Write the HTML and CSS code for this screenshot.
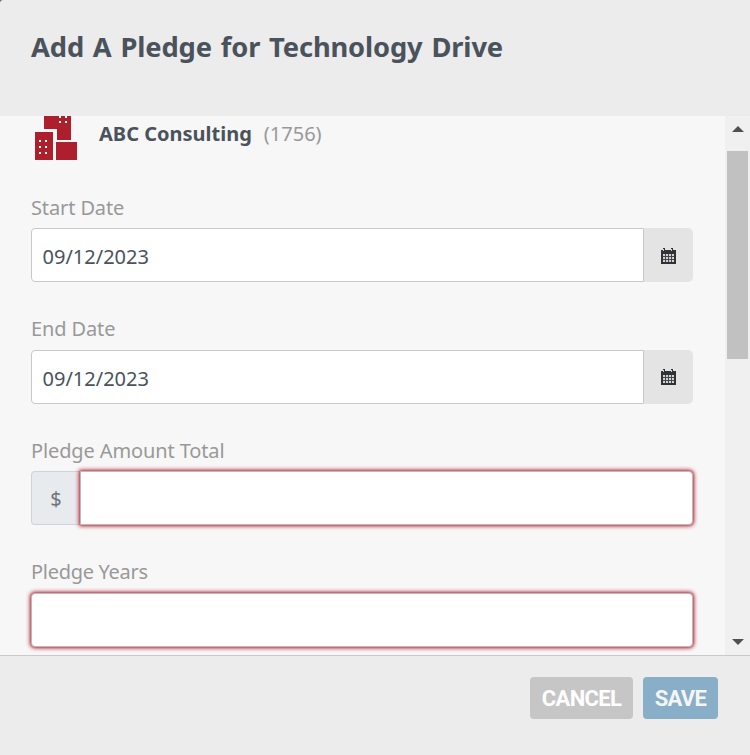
FILE: index.html
```html
<!DOCTYPE html>
<html lang="en">
<head>
<meta charset="utf-8">
<title>Add A Pledge</title>
<link rel="stylesheet" href="styles.css">
</head>
<body>
<svg width="0" height="0" class="defs"><symbol id="cal" viewBox="0 0 16 18"><path fill="#303236" d="M1 3h2V1h2v2h6V1h2v2h3v14H1z"/><path fill="#d2d2d4" d="M3 7h11v8H3z"/><path fill="none" stroke="#45464b" d="M5.5 7v8M8.500 7v8M11.500 7v8M3 9.500h11M3 12.500h11"/><path fill="#c8d0d8" d="M3 2h1v2H3zM11 2h1v2h-1z"/></symbol></svg>
<div class="modal">
<header class="header"><h1>Add A Pledge for Technology Drive</h1></header>
<div class="body">
<main class="content">
<div class="org">
<svg class="org-icon" width="42" height="44" viewBox="0 0 42 44"><g fill="#ad1f2d"><path d="M9 0h27v24H22V13H9z"/><path d="M0 16h18v28H0z"/><path d="M21 26h21v18H21z"/></g><g fill="#fff"><path d="M24 0h2v2h-2zM30 0h2v2h-2zM24 5h2v2h-2zM30 5h2v2h-2zM4 24h2v2H4zM10 24h2v2h-2zM4 30h2v2H4zM10 30h2v2h-2zM4 36h2v2H4zM10 36h2v2h-2z"/></g></svg>
<strong class="name">ABC Consulting</strong><span class="id">(1756)</span></div>
<div class="field"><label for="s">Start Date</label><div class="group"><input class="date" id="s" value="09/12/2023"><button class="cal" aria-label="Calendar"><svg width="16" height="18"><use href="#cal"/></svg></button></div></div>
<div class="field"><label class="tight" for="e">End Date</label><div class="group"><input class="date end" id="e" value="09/12/2023"><button class="cal" aria-label="Calendar"><svg width="16" height="18"><use href="#cal"/></svg></button></div></div>
<div class="field"><label for="a">Pledge Amount Total</label><div class="group"><span class="prefix">$</span><input class="invalid" id="a"></div></div>
<div class="field"><label class="tight years" for="y">Pledge Years</label><div class="group"><input class="invalid" id="y"></div></div>
</main>
<div class="scroll"><svg width="12" height="6" viewBox="0 0 12 6"><path fill="#505050" d="M6 0l6 6H0z"/></svg><div class="thumb"></div><svg class="down" width="12" height="6" viewBox="0 0 12 6"><path fill="#505050" d="M0 0h12L6 6z"/></svg></div>
</div>
<footer class="footer"><button class="btn cancel">CANCEL</button><button class="btn save">SAVE</button></footer>
</div>
</body>
</html>
```
FILE: styles.css
```css
*{box-sizing:border-box}
body{margin:0;font-family:"Noto Sans",sans-serif;background:#286381}
.modal{height:755px;display:flex;flex-direction:column;background:#ececec;border-top-left-radius:3px}
.header{height:116px;padding:27px 31px}
h1{margin:0;font-size:27.3px;font-weight:700;line-height:40px;letter-spacing:-.13px;word-spacing:1.9px;color:#4a525b;white-space:nowrap}
.body{height:539px;display:flex;background:#f7f7f7;overflow:hidden}
.content{flex:1;padding:0 32px 0 31px}
.org{height:81px;display:flex;align-items:flex-start;padding-left:4px}
.name{margin-left:22px;font-size:20px;line-height:36px;color:#4a525b}
.id{margin-left:12px;font-size:20px;line-height:36px;color:#999}
.field{height:121.5px}
label{display:block;height:31px;font-size:20px;line-height:22px;color:#999;letter-spacing:-.12px}
.tight{line-height:20px}
.years{letter-spacing:-.3px}
.group{display:flex;height:54px}
input{flex:1;min-width:0;border:1px solid #c6c8ca;border-radius:4px;padding:0 10px;font:20px "Noto Sans",sans-serif;color:#4a525b;background:#fff;outline:0}
.date{border-radius:4px 0 0 4px;padding-top:2px;padding-left:10.5px}
.end{padding-top:3px}
.cal{width:49px;border:0;border-radius:0 5px 5px 0;background:#e4e4e4;padding:1px 1px 0 0;display:flex;align-items:center;justify-content:center}
.prefix{width:49px;background:#e8ebee;border:1px solid #ced4da;border-right:0;border-radius:4px 0 0 4px;color:#6c757d;line-height:54px;text-align:center;font-size:20px}
.invalid{border-color:#bbb;border-radius:4px;box-shadow:0 0 4px 1px #b51f30,0 0 2px #b51f3099}
.prefix + .invalid{border-radius:0 4px 4px 0}
.scroll{width:25px;background:#f0f0f0;display:flex;flex-direction:column;align-items:center;padding:10px 0}
.thumb{width:21px;height:208px;margin-top:19px;background:#c1c1c1}
.down{margin-top:auto}
.footer{flex:1;border-top:1px solid #c9c9c9;display:flex;justify-content:flex-end;gap:10px;padding:21px 32px}
.btn{height:42px;border:0;border-radius:4px;padding:0;color:#fff;font:bold 22px Roboto,sans-serif;letter-spacing:-.65px}
.cancel{width:103px;background:#c6c6c6}
.save{width:75px;background:#89aec8;color:#f4f5f6}
.defs{position:absolute}
```
